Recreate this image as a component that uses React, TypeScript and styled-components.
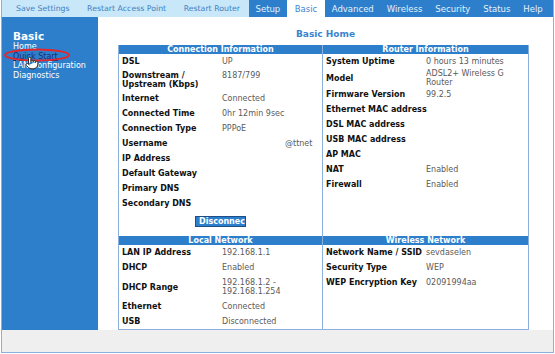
import React from "react";
import styled, { createGlobalStyle } from "styled-components";
import { Pointer } from "lucide-react";

const GlobalStyle = createGlobalStyle`
  html, body {
    margin: 0;
    padding: 0;
    background: #fff;
  }
  body {
    font-family: "DejaVu Sans", Verdana, sans-serif;
    font-size: 8px;
  }
`;

const BLUE = "#2d7fcc";
const LINE = "#8cb0de";

const Frame = styled.div`
  box-sizing: border-box;
  width: 553px;
  height: 353px;
  margin-left: 1px;
  border: 1px solid ${LINE};
  border-top: none;
  display: flex;
  flex-direction: column;
  overflow: hidden;
`;

const TopBar = styled.div`
  display: flex;
  height: 17px;
  flex-shrink: 0;
`;

const Actions = styled.div`
  display: flex;
  align-items: center;
  width: 247px;
  flex-shrink: 0;
  padding-left: 5px;
  box-sizing: border-box;
  background: #c8e7f9;
  overflow: hidden;
`;

const ActionLink = styled.a`
  color: #3f7fc0;
  padding: 0 8.5px 0 9px;
  font-size: 7.8px;
  white-space: nowrap;
  cursor: pointer;
`;

const Tabs = styled.div`
  flex: 1;
  display: flex;
  background: ${BLUE};
`;

const Tab = styled.a<{ $active?: boolean }>`
  display: flex;
  align-items: center;
  padding: 0 ${(p) => (p.$active ? 8 : 6.5)}px;
  color: ${(p) => (p.$active ? "#3a86d2" : "#e6f1fb")};
  background: ${(p) => (p.$active ? "#fff" : "transparent")};
  white-space: nowrap;
  font-size: 8.5px;
`;

const Body = styled.div`
  display: flex;
  flex: 1;
`;

const Sidebar = styled.div`
  position: relative;
  width: 96px;
  flex-shrink: 0;
  background: ${BLUE};
  padding: 13px 0 0 11px;
  box-sizing: border-box;
  color: #fff;
`;

const SideTitle = styled.div`
  font-weight: bold;
  font-size: 10.5px;
  line-height: 12px;
`;

const SideLink = styled.a<{ $current?: boolean }>`
  display: block;
  line-height: 9.5px;
  color: ${(p) => (p.$current ? "#1a2f6a" : "#fff")};
  text-decoration: ${(p) => (p.$current ? "underline" : "none")};
  white-space: nowrap;
`;

const Highlight = styled.svg`
  position: absolute;
  left: 1px;
  top: 31px;
`;

const Cursor = styled.div`
  position: absolute;
  left: 23px;
  top: 39px;
  line-height: 0;
`;

const Main = styled.div`
  flex: 1;
  padding: 12px 0 0 20px;
`;

const Heading = styled.h1`
  margin: 0 0 5px -20px;
  text-align: center;
  font-size: 9px;
  line-height: 11px;
  color: #3a84d0;
`;

const InfoGrid = styled.div`
  display: grid;
  grid-template-columns: 204px 205px;
  width: 411px;
  border: 1px solid ${LINE};
  border-top: none;
  box-sizing: border-box;
`;

const Panel = styled.div<{ $divider?: boolean }>`
  border-right: ${(p) => (p.$divider ? `1px solid ${LINE}` : "none")};
`;

const PanelHead = styled.div`
  height: 9px;
  line-height: 9px;
  background: ${BLUE};
  color: #fff;
  font-weight: bold;
  text-align: center;
  white-space: nowrap;
`;

const Row = styled.div<{ $pad?: number }>`
  display: grid;
  grid-template-columns: 100px 1fr;
  align-items: start;
  padding: ${(p) => p.$pad ?? 3}px 0 ${(p) => p.$pad ?? 3}px 3px;
  line-height: 9px;
`;

const Label = styled.div`
  align-self: center;
  font-weight: bold;
  color: #111;
  white-space: nowrap;
`;

const Value = styled.div<{ $shift?: number }>`
  color: #5a5a5a;
  padding-left: ${(p) => p.$shift ?? 0}px;
  white-space: nowrap;
  min-height: 9px;
`;

const ButtonRow = styled.div`
  display: flex;
  justify-content: center;
  padding: 5px 0 9px;
`;

const Button = styled.button`
  width: 51px;
  height: 11px;
  padding: 0 0 0 3px;
  overflow: hidden;
  text-align: left;
  border: 1px solid #1d4f86;
  background: ${BLUE};
  color: #fff;
  font-family: inherit;
  font-weight: bold;
  font-size: 8px;
  line-height: 9px;
  white-space: nowrap;
`;

const Footer = styled.div`
  height: 22px;
  flex-shrink: 0;
  background: #efefef;
`;

type Item = { label: React.ReactNode; value?: React.ReactNode; shift?: number; pad?: number };

const connection: Item[] = [
  { label: "DSL", value: "UP" },
  { label: <>Downstream /<br />Upstream (Kbps)</>, value: "8187/799", pad: 2 },
  { label: "Internet", value: "Connected" },
  { label: "Connected Time", value: "0hr 12min 9sec" },
  { label: "Connection Type", value: "PPPoE" },
  { label: "Username", value: "@ttnet", shift: 63 },
  { label: "IP Address" },
  { label: "Default Gateway" },
  { label: "Primary DNS" },
  { label: "Secondary DNS" },
];

const router: Item[] = [
  { label: "System Uptime", value: "0 hours 13 minutes" },
  { label: "Model", value: <>ADSL2+ Wireless G<br />Router</>, pad: 0 },
  { label: "Firmware Version", value: "99.2.5" },
  { label: "Ethernet MAC address" },
  { label: "DSL MAC address" },
  { label: "USB MAC address" },
  { label: "AP MAC" },
  { label: "NAT", value: "Enabled" },
  { label: "Firewall", value: "Enabled" },
];

const local: Item[] = [
  { label: "LAN IP Address", value: "192.168.1.1" },
  { label: "DHCP", value: "Enabled" },
  { label: "DHCP Range", value: <>192.168.1.2 -<br />192.168.1.254</>, pad: 3 },
  { label: "Ethernet", value: "Connected" },
  { label: "USB", value: "Disconnected" },
];

const wireless: Item[] = [
  { label: "Network Name / SSID", value: "sevdaselen" },
  { label: "Security Type", value: "WEP" },
  { label: "WEP Encryption Key", value: "02091994aa" },
];

const Rows = ({ items }: { items: Item[] }) => (
  <>
    {items.map((it, i) => (
      <Row key={i} $pad={it.pad}>
        <Label>{it.label}</Label>
        <Value $shift={it.shift}>{it.value}</Value>
      </Row>
    ))}
  </>
);

export default function App() {
  return (
    <>
      <GlobalStyle />
      <Frame>
        <TopBar>
          <Actions>
            <ActionLink>Save Settings</ActionLink>
            <ActionLink>Restart Access Point</ActionLink>
            <ActionLink>Restart Router</ActionLink>
          </Actions>
          <Tabs>
            <Tab>Setup</Tab>
            <Tab $active>Basic</Tab>
            <Tab>Advanced</Tab>
            <Tab>Wireless</Tab>
            <Tab>Security</Tab>
            <Tab>Status</Tab>
            <Tab>Help</Tab>
          </Tabs>
        </TopBar>
        <Body>
          <Sidebar>
            <SideTitle>Basic</SideTitle>
            <SideLink>Home</SideLink>
            <SideLink $current>Quick Start</SideLink>
            <SideLink>LAN Configuration</SideLink>
            <SideLink>Diagnostics</SideLink>
            <Highlight width="68" height="14" viewBox="0 0 68 14">
              <ellipse cx="34" cy="7" rx="32" ry="5.5" fill="none" stroke="#e3262b" strokeWidth="2" />
            </Highlight>
            <Cursor>
              <Pointer size={14} fill="#fff" color="#222" strokeWidth={1.6} />
            </Cursor>
          </Sidebar>
          <Main>
            <Heading>Basic Home</Heading>
            <InfoGrid>
              <Panel $divider>
                <PanelHead>Connection Information</PanelHead>
                <Rows items={connection} />
                <ButtonRow>
                  <Button>Disconnect</Button>
                </ButtonRow>
              </Panel>
              <Panel>
                <PanelHead>Router Information</PanelHead>
                <Rows items={router} />
              </Panel>
              <Panel $divider>
                <PanelHead>Local Network</PanelHead>
                <Rows items={local} />
              </Panel>
              <Panel>
                <PanelHead>Wireless Network</PanelHead>
                <Rows items={wireless} />
              </Panel>
            </InfoGrid>
          </Main>
        </Body>
        <Footer />
      </Frame>
    </>
  );
}
